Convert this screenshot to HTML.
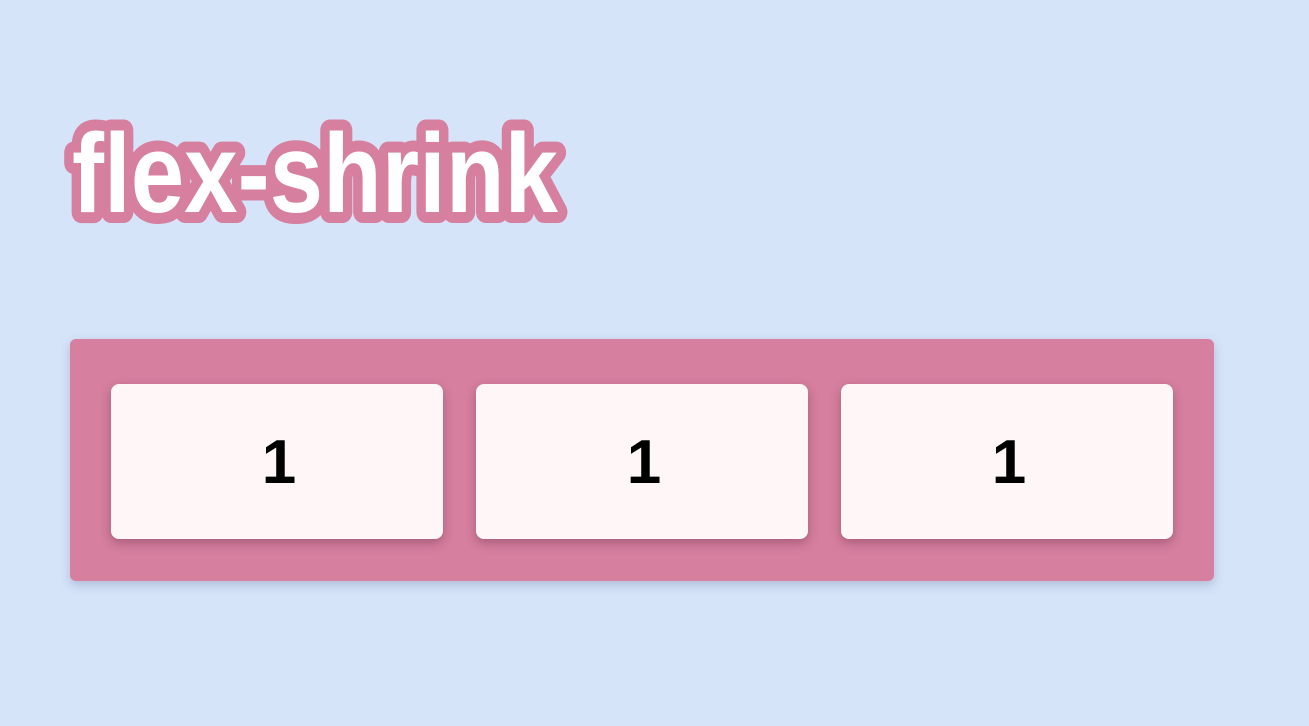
<!DOCTYPE html>
<html><head><style>
html,body{margin:0;padding:0}
body{width:1309px;height:726px;background:#d6e4f9;position:relative;overflow:hidden;font-family:"Liberation Sans",sans-serif}
svg.t{position:absolute;left:0;top:0}
.wrap{position:absolute;left:70px;top:339px;width:1144px;height:242px;background:#d67f9f;border-radius:6px;box-shadow:0 4px 10px rgba(90,100,140,.3)}
.box{position:absolute;top:45px;width:332px;height:155px;background:#fff7f7;border-radius:8px;box-shadow:0 4px 10px rgba(80,30,50,.35);display:flex;align-items:center;justify-content:center;font-size:62px;font-weight:bold;color:#000;padding-left:4px;box-sizing:border-box;padding-top:2px}
</style></head><body>
<svg class="t" width="700" height="300"><text x="72" y="212" font-family="Liberation Sans, sans-serif" font-weight="bold" font-size="112" textLength="486" lengthAdjust="spacingAndGlyphs" fill="#fff" stroke="#d67f9f" stroke-width="22" stroke-linejoin="round" paint-order="stroke fill">flex-shrink</text></svg>
<div class="wrap">
<div class="box" style="left:41px">1</div>
<div class="box" style="left:406px">1</div>
<div class="box" style="left:771px">1</div>
</div>
</body></html>
